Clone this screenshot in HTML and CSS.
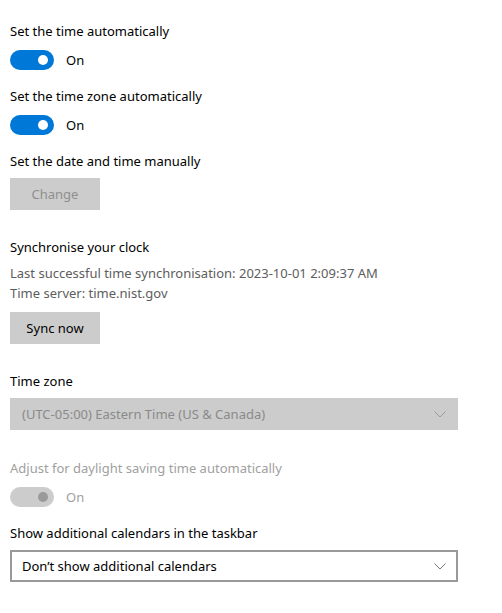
FILE: index.html
```html
<!DOCTYPE html>
<html lang="en">
<head>
    <meta charset="UTF-8">
    <meta name="viewport" content="width=device-width, initial-scale=1.0">
    <title>Date &amp; time</title>
    <link rel="stylesheet" href="styles.css">
</head>
<body>
    <div class="page">
        <div class="label">Set the time automatically</div>
        <div class="toggle-row">
            <span class="toggle on"><span class="knob"></span></span>
            <span class="toggle-text">On</span>
        </div>

        <div class="label">Set the time zone automatically</div>
        <div class="toggle-row">
            <span class="toggle on"><span class="knob"></span></span>
            <span class="toggle-text">On</span>
        </div>

        <div class="label snug">Set the date and time manually</div>
        <button class="button" disabled>Change</button>

        <div class="label heading sub">Synchronise your clock</div>
        <div class="info">
            Last successful time synchronisation: 2023-10-01 2:09:37 AM<br>
            Time server: time.nist.gov
        </div>
        <button class="button">Sync now</button>

        <div class="label heading snug">Time zone</div>
        <div class="dropdown disabled">
            <span>(UTC-05:00) Eastern Time (US &amp; Canada)</span>
            <svg class="chevron" width="12" height="7" viewBox="0 0 12 7"><path d="M0.5 0.5 L6 6 L11.5 0.5" fill="none" stroke="currentColor" stroke-width="1"/></svg>
        </div>

        <div class="label heading wide muted">Adjust for daylight saving time automatically</div>
        <div class="toggle-row">
            <span class="toggle off"><span class="knob"></span></span>
            <span class="toggle-text muted">On</span>
        </div>

        <div class="label snug">Show additional calendars in the taskbar</div>
        <div class="dropdown">
            <span>Don’t show additional calendars</span>
            <svg class="chevron" width="12" height="7" viewBox="0 0 12 7"><path d="M0.5 0.5 L6 6 L11.5 0.5" fill="none" stroke="currentColor" stroke-width="1"/></svg>
        </div>
    </div>
</body>
</html>
```

FILE: styles.css
```css
body {
    margin: 0;
    background-color: #fff;
    font-family: 'Noto Sans', 'Open Sans', sans-serif;
    font-size: 13px;
    line-height: 20px;
    color: #000;
}
.page {
    padding: 21px 10px 0;
    width: 448px;
}
.label {
    margin-bottom: 9px;
}
.label.heading {
    margin-top: 27px;
}
.label.heading.wide {
    margin-top: 28px;
}
.label.sub {
    margin-bottom: 6px;
}
.label.snug {
    margin-bottom: 7px;
}
.muted {
    color: #a0a0a0;
}
.toggle-row {
    display: flex;
    align-items: center;
    height: 20px;
    margin-bottom: 16px;
}
.toggle {
    display: flex;
    align-items: center;
    justify-content: flex-end;
    width: 44px;
    height: 20px;
    border-radius: 10px;
    box-sizing: border-box;
    padding-right: 6px;
}
.toggle.on {
    background-color: #0078d7;
}
.toggle.on .knob {
    background-color: #fff;
}
.toggle.off {
    background-color: #cccccc;
}
.toggle.off .knob {
    background-color: #9a9a9a;
}
.knob {
    width: 10px;
    height: 10px;
    border-radius: 50%;
}
.toggle-text {
    margin-left: 12px;
}
.button {
    display: block;
    width: 90px;
    height: 32px;
    border: none;
    padding: 0;
    background-color: #cccccc;
    font-family: inherit;
    font-size: 13px;
    color: #000;
}
.button:disabled {
    color: #8f8f8f;
}
.info {
    margin-bottom: 9px;
    color: #5d5d5d;
}
.dropdown {
    display: flex;
    align-items: center;
    justify-content: space-between;
    height: 32px;
    box-sizing: border-box;
    padding: 0 10px;
    border: 2px solid #999;
    color: #000;
}
.dropdown.disabled {
    border-color: #cccccc;
    background-color: #cccccc;
    color: #8a8a8a;
}
.dropdown .chevron {
    color: #777;
}
.dropdown.disabled .chevron {
    color: #999;
}
```
